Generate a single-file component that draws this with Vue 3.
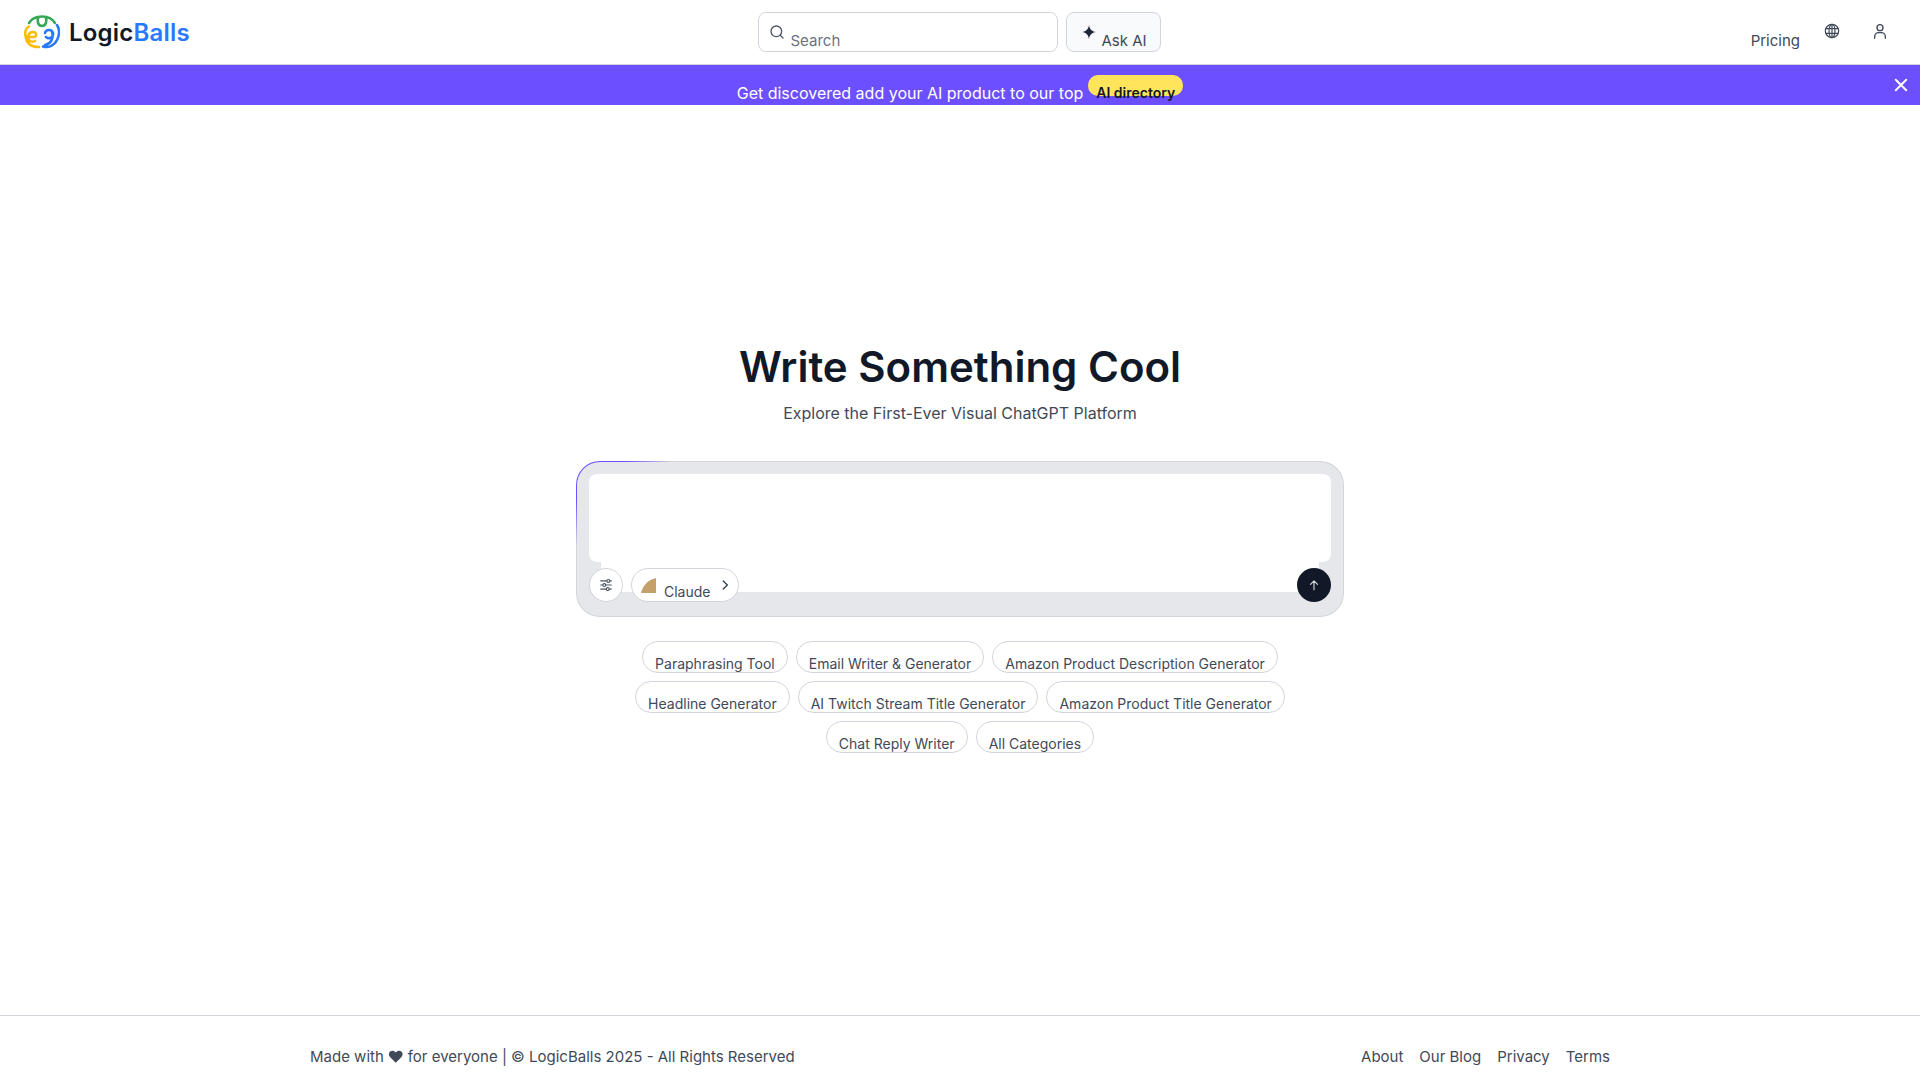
<script setup>
const chips = [
  'Paraphrasing Tool',
  'Email Writer & Generator',
  'Amazon Product Description Generator',
  'Headline Generator',
  'AI Twitch Stream Title Generator',
  'Amazon Product Title Generator',
  'Chat Reply Writer',
  'All Categories',
]
const footerLinks = ['About', 'Our Blog', 'Privacy', 'Terms']
</script>

<template>
  <div class="page">
    <header class="topbar">
      <a class="brand">
        <svg class="brand__logo" viewBox="0 0 36 34" fill="none" stroke-width="2.500" stroke-linecap="round" stroke-linejoin="round">
          <path d="M5 8C8 3 13 1.500 18 1.500S28 3 31 8M14.500 2C13 5 13.500 11 18 11S23 5 21.500 2" stroke="#34a853" />
          <path d="M5 11.500C1.500 13.500.5 18 2 23c1 6 5 9 13 9M3 22h7c3 0 3-5-1-5s-6 4-4 8c1 2 4 2 6 1" stroke="#fbbc05" />
          <path d="M33 10c2.500 4 3 9 0 15-3 6-9 8-14 6.500M22 22c3 3 8 0 7-4-1-4-7-4-8 0M28 17c2 6-1 12-7 13" stroke="#2979ff" />
        </svg>
        <span class="brand__name">Logic<span class="brand__accent">Balls</span></span>
      </a>

      <div class="topbar__center">
        <label class="search">
          <svg class="search__icon" viewBox="0 0 24 24" fill="none" stroke="currentColor" stroke-width="2" stroke-linecap="round">
            <circle cx="11" cy="11" r="8" />
            <path d="m21 21-4.300-4.300" />
          </svg>
          <span>Search</span>
        </label>
        <button class="ask">
          <svg class="ask__icon" viewBox="0 0 24 24" fill="currentColor">
            <path d="M12 1.500c.9 6 3.900 9.500 10.500 10.500-6.600 1-9.600 4.500-10.500 10.500C11.100 16.500 8.100 13 1.500 12 8.100 11 11.100 7.500 12 1.500z" />
          </svg>
          <span>Ask AI</span>
        </button>
      </div>

      <nav class="topbar__right">
        <a class="pricing">Pricing</a>
        <svg class="nav-icon nav-icon--globe" viewBox="0 0 24 24" fill="none" stroke="currentColor" stroke-width="1.800">
          <circle cx="12" cy="12" r="10" />
          <ellipse cx="12" cy="12" rx="4.500" ry="10" />
          <path d="M2.500 8.500h19M2.500 15.500h19M12 2v20" />
        </svg>
        <svg class="nav-icon nav-icon--user" viewBox="0 0 24 24" fill="none" stroke="currentColor" stroke-width="2" stroke-linecap="round">
          <circle cx="12" cy="7" r="4.500" />
          <path d="M4 23v-2.500a6 6 0 0 1 6-6h4a6 6 0 0 1 6 6V23" />
        </svg>
      </nav>
    </header>

    <div class="banner">
      <span class="banner__text">Get discovered add your AI product to our top</span>
      <a class="banner__pill"><span>AI directory</span></a>
      <button class="banner__close" aria-label="Close">
        <svg viewBox="0 0 24 24" fill="none" stroke="currentColor" stroke-width="2.600" stroke-linecap="round">
          <path d="M5 5l14 14M19 5L5 19" />
        </svg>
      </button>
    </div>

    <main class="main">
      <h1 class="title">Write Something Cool</h1>
      <p class="subtitle">Explore the First-Ever Visual ChatGPT Platform</p>

      <div class="composer">
        <div class="composer__inner">
          <div class="composer__input"></div>
          <div class="composer__tools">
            <button class="round-btn">
              <svg viewBox="0 0 24 24" fill="none" stroke="currentColor" stroke-width="2" stroke-linecap="round">
                <path d="M3 5h10M19 5h2M3 12h3M12 12h9M3 19h9M18 19h3" />
                <circle cx="16" cy="5" r="2.500" />
                <circle cx="9" cy="12" r="2.500" />
                <circle cx="15" cy="19" r="2.500" />
              </svg>
            </button>
            <button class="model">
              <svg class="model__icon" viewBox="0 0 15 15">
                <path d="M0 15C2 7 7 2 15 0v15z" fill="#c4a06a" />
              </svg>
              <span class="model__name">Claude</span>
              <svg class="model__arrow" viewBox="0 0 24 24" fill="none" stroke="currentColor" stroke-width="2.400" stroke-linecap="round" stroke-linejoin="round">
                <path d="m9 5 7 7-7 7" />
              </svg>
            </button>
            <button class="send">
              <svg viewBox="0 0 24 24" fill="none" stroke="currentColor" stroke-width="2" stroke-linecap="round" stroke-linejoin="round">
                <path d="M12 20V5M6 11l6-6 6 6" />
              </svg>
            </button>
          </div>
        </div>
      </div>

      <div class="chips">
        <a v-for="chip in chips" :key="chip" class="chip">{{ chip }}</a>
      </div>
    </main>

    <footer class="footer">
      <div class="footer__row">
        <span>Made with <svg class="heart" viewBox="0 0 24 24" fill="currentColor"><path d="M12 22 2.800 12.700C.2 10 .5 6 3 3.900c2.600-2.100 6.400-1.700 9 1.600 2.600-3.300 6.400-3.700 9-1.600 2.500 2.100 2.800 6.100.2 8.800z" /></svg> for everyone | © LogicBalls 2025 - All Rights Reserved</span>
        <nav class="footer__links">
          <a v-for="link in footerLinks" :key="link">{{ link }}</a>
        </nav>
      </div>
    </footer>
  </div>
</template>

<style scoped>
.page {
  min-height: 1080px;
  display: flex;
  flex-direction: column;
  background: #fff;
  color: #3f4958;
  font-family: Inter, "Liberation Sans", sans-serif;
  font-size: 14px;
}

button {
  font: inherit;
  color: inherit;
  padding: 0;
  background: none;
  border: none;
}

.topbar {
  height: 65px;
  box-sizing: border-box;
  border-bottom: 1px solid #d1d5db;
  padding: 0 26px 0 24px;
  display: grid;
  grid-template-columns: 1fr auto 1fr;
  align-items: center;
}

.brand {
  display: flex;
  align-items: center;
  gap: 9px;
}

.brand__logo {
  width: 36px;
  height: 34px;
}

.brand__name {
  font-size: 24px;
  font-weight: 600;
  color: #111827;
  letter-spacing: 0.2px;
}

.brand__accent {
  color: #2979ff;
}

.topbar__center {
  display: flex;
  gap: 8px;
}

.search,
.ask {
  height: 40px;
  box-sizing: border-box;
  border: 1px solid #d1d5db;
  border-radius: 8px;
  display: flex;
  font-size: 15px;
}

.search {
  width: 300px;
  padding: 0 10px;
  color: #6b7280;
}

.search span,
.ask span {
  margin-top: 19px;
  line-height: 17px;
  white-space: nowrap;
}

.search__icon {
  width: 16px;
  height: 16px;
  margin: 11px 6px 0 0;
  color: #4b5563;
}

.ask {
  width: 95px;
  padding: 0 0 0 13px;
  background: #f9fafb;
}

.ask__icon {
  flex: none;
  width: 16px;
  height: 16px;
  margin: 11px 5px 0 1px;
  color: #1f2937;
}

.topbar__right {
  display: flex;
  justify-content: flex-end;
  align-items: flex-start;
}

.pricing {
  margin-top: 16px;
  font-size: 15px;
  line-height: 17px;
}

.nav-icon {
  flex: none;
  width: 16px;
  height: 16px;
  margin-top: 7px;
}

.nav-icon--globe {
  margin-left: 24px;
}

.nav-icon--user {
  margin: 7px 6px 0 32px;
}

.banner {
  height: 40px;
  background: #6c4fff;
  color: #fff;
  position: relative;
  display: flex;
  justify-content: center;
}

.banner__text {
  font-size: 16px;
  line-height: 19px;
  margin-top: 19px;
}

.banner__pill {
  width: 95px;
  height: 21px;
  margin: 10px 0 0 5px;
  border-radius: 10px;
  background: #ffe45c;
  color: #111827;
  font-weight: 600;
  text-align: center;
}

.banner__pill span {
  display: block;
  margin-top: 9px;
  line-height: 17px;
}

.banner__close {
  position: absolute;
  right: 10px;
  top: 11px;
  width: 18px;
  height: 18px;
}

.banner__close svg {
  display: block;
}

.main {
  flex: 1;
  display: flex;
  flex-direction: column;
  align-items: center;
  padding-top: 236px;
}

.title {
  margin: 0;
  font-size: 42px;
  line-height: 52px;
  font-weight: 600;
  color: #111827;
}

.subtitle {
  margin: 9px 0 0;
  font-size: 16px;
  line-height: 22px;
}

.composer {
  width: 768px;
  height: 156px;
  box-sizing: border-box;
  margin-top: 37px;
  padding: 12px;
  border-radius: 24px;
  border: 1px solid transparent;
  background:
    linear-gradient(#e5e7eb, #e5e7eb) padding-box,
    conic-gradient(#d1d5db 0deg 269deg, #6c4fff 276deg 283deg, #d1d5db 285deg 360deg) border-box;
}

.composer__inner {
  height: 128px;
  position: relative;
}

.composer__input {
  height: 88px;
  background: #fff;
  border-radius: 8px;
}

.composer__tools {
  height: 34px;
  margin-top: 6px;
  display: flex;
  gap: 8px;
  position: relative;
}

.composer__tools::before {
  content: "";
  position: absolute;
  left: 12px;
  right: 12px;
  top: -6px;
  height: 30px;
  background: #fff;
}

.round-btn,
.model,
.send {
  position: relative;
  height: 34px;
  box-sizing: border-box;
  border-radius: 17px;
}

.round-btn {
  width: 34px;
  background: #fff;
  border: 1px solid #d1d5db;
  color: #4b5563;
  display: flex;
  align-items: center;
  justify-content: center;
}

.round-btn svg {
  width: 14px;
  height: 14px;
}

.model {
  width: 108px;
  background: #fff;
  border: 1px solid #d1d5db;
  display: flex;
  padding-left: 9px;
}

.model__icon {
  width: 15px;
  height: 15px;
  margin-top: 9px;
}

.model__name {
  margin: 14px 0 0 8px;
  line-height: 17px;
}

.model__arrow {
  width: 14px;
  height: 14px;
  margin: 9px 0 0 7px;
  color: #374151;
}

.send {
  width: 34px;
  margin-left: auto;
  background: #111827;
  color: #d1d5db;
  display: flex;
  align-items: center;
  justify-content: center;
}

.send svg {
  width: 14px;
  height: 14px;
}

.chips {
  width: 680px;
  margin-top: 24px;
  display: flex;
  flex-wrap: wrap;
  justify-content: center;
  gap: 8px;
}

.chip {
  height: 32px;
  box-sizing: border-box;
  padding: 13px 12px 0;
  border: 1px solid #d1d5db;
  border-radius: 16px;
  line-height: 17px;
  white-space: nowrap;
}

.footer {
  height: 65px;
  box-sizing: border-box;
  border-top: 1px solid #d1d5db;
}

.footer__row {
  width: 1300px;
  margin: 0 auto;
  padding-top: 32px;
  display: flex;
  justify-content: space-between;
  font-size: 15px;
  line-height: 18px;
}

.heart {
  width: 15.5px;
  height: 15px;
  vertical-align: -2px;
}

.footer__links {
  display: flex;
  gap: 16px;
}
</style>

<style>
html, body {
  margin: 0;
  background: #fff;
}
</style>
